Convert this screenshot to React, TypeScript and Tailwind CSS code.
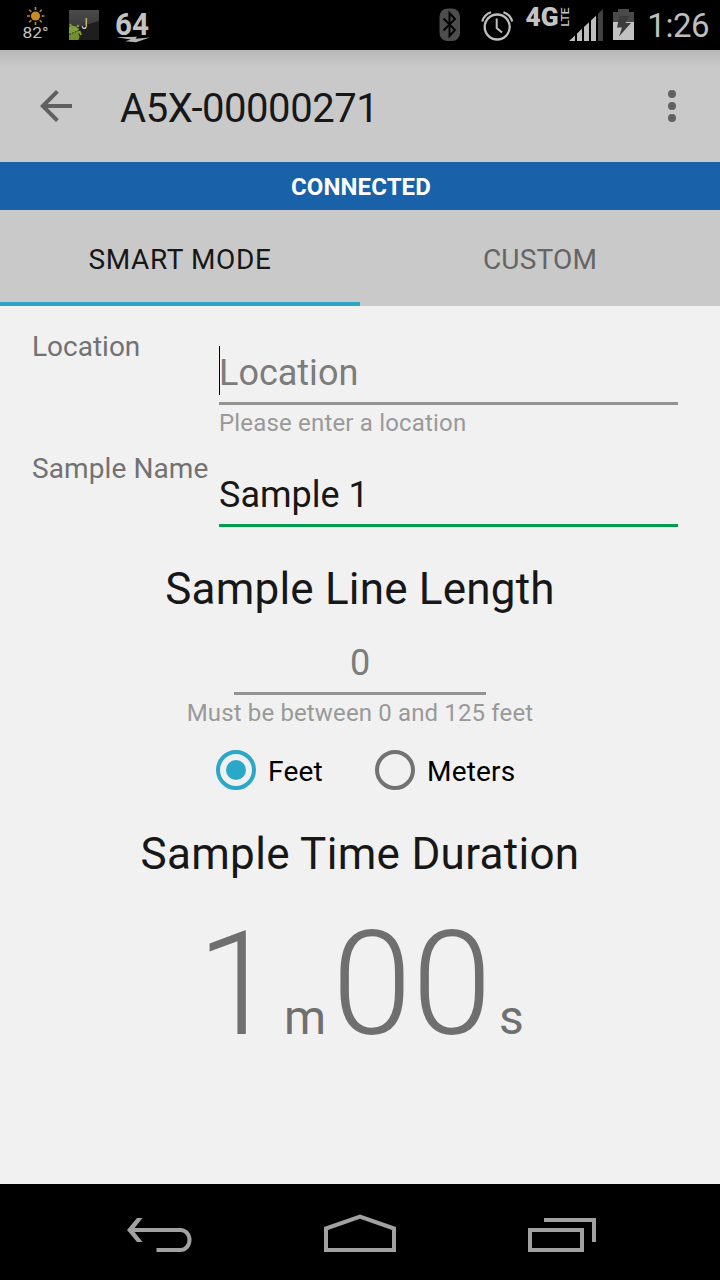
import { useState } from "react";

function StatusBar() {
  return (
    <div className="flex h-[50px] items-start bg-black text-[#bebebe]">
      <svg className="ml-[20px] shrink-0" width="32" height="50" viewBox="0 0 32 50">
        <g stroke="#c08a2c" strokeWidth="1.6">
          <path d="M15.5 7v3M15.5 22v3M7 16h3M21.500 16h3M9.300 9.800l2 2M19.700 20.200l2 2M9.300 22.200l2-2M19.700 11.800l2-2" />
        </g>
        <circle cx="15.500" cy="16" r="4.600" fill="#c68c26" />
        <text x="2.500" y="37.700" fontSize="15.500" textLength="26" lengthAdjust="spacingAndGlyphs" fill="#c4c4c4" fontFamily="Roboto, sans-serif">82°</text>
      </svg>

      <svg className="ml-[17px] mt-[10px] shrink-0" width="30" height="30" viewBox="0 0 30 30">
        <defs>
          <linearGradient id="tile" x1="0" y1="0" x2="0" y2="1">
            <stop offset="0" stopColor="#4b4b4b" />
            <stop offset="1" stopColor="#2c2c2c" />
          </linearGradient>
        </defs>
        <rect width="30" height="30" fill="url(#tile)" />
        <path d="M0 20L30 11V30H0z" fill="#1e1e1e" />
        <path d="M0 17q5-3 9.500 1.500l1.500 4-11 5z" fill="#82a038" />
        <path d="M0 25l9-3 1.500 5-1 3H0z" fill="#6f8e2c" />
        <path d="M10.500 21l1.500 4M2 16L1 14M8.500 17l1-2" stroke="#82a038" strokeWidth="2" />
        <path d="M0 24.500l10-4" stroke="#26301a" strokeDasharray="2 1" />
        <text x="12.500" y="19" fontSize="15" textLength="6" lengthAdjust="spacingAndGlyphs" fill="#d8d8d8" fontFamily="Roboto, sans-serif">J</text>
      </svg>

      <svg className="ml-[15px] shrink-0" width="40" height="50" viewBox="0 0 40 50">
        <text x="1" y="35" fontSize="31" fontWeight="700" textLength="34" lengthAdjust="spacingAndGlyphs" fill="#c2c2c2" fontFamily="Roboto, sans-serif">64</text>
        <path d="M2 37.200L23 36.800 21.500 38.700 36 37.500 22 42.200 11 41.200 17 39.600z" fill="#b4b4b4" />
      </svg>

      <div className="ml-auto flex items-start">
        <svg className="mt-[8px]" width="22" height="34" viewBox="0 0 22 34">
          <rect x="0.500" y="0.500" width="20.500" height="32.500" rx="8" fill="#4d4d4d" />
          <path d="M4.500 10.500L16 22l-5.500 6V5L16 11 4.500 22.500" fill="none" stroke="#000" strokeWidth="1.900" />
        </svg>

        <svg className="ml-[20px] mt-[9px]" width="33" height="33" viewBox="0 0 33 33" fill="none" stroke="#bebebe">
          <circle cx="16.200" cy="18" r="12.500" strokeWidth="2.300" />
          <path d="M15.700 9.500v9.500l5.300 4.500" strokeWidth="2" />
          <path d="M1.300 12.500Q3 5.500 10 3.200M31.200 12.500Q29.400 5.500 22.400 3.200" strokeWidth="2.200" />
        </svg>

        <svg className="ml-[12px]" width="44" height="50" viewBox="0 0 44 50" fill="#c4c4c4" fontFamily="Roboto, sans-serif">
          <text x="-0.500" y="25.800" fontSize="25" fontWeight="900" textLength="33" lengthAdjust="spacingAndGlyphs">4G</text>
          <text transform="translate(42.500 26.500) rotate(-90)" fontSize="11.500" fontWeight="500" textLength="19" lengthAdjust="spacingAndGlyphs">LTE</text>
        </svg>

        <svg className="-ml-[1px] mt-[9px]" width="34" height="32" viewBox="0 0 34 32" fill="#bebebe">
          <path d="M0 32L6 26.500V32zM8 24.500l5-4.700V32H8zM15 18l5-4.700V32h-5zM22 11.500l5-4.700V32h-5z" />
          <path d="M29 4.800L34 0v32h-5z" fill="#414141" />
        </svg>

        <svg className="ml-[10px] mt-[9px]" width="21" height="32" viewBox="0 0 21 32">
          <path d="M5 0h11v3h5v10H0V3h5z" fill="#4a4a4a" />
          <path d="M0 13h21v18H0z" fill="#c2c2c2" />
          <path d="M6.500 7h9.500L12.500 14H18L6 27.500l3-9H4z" fill="#3c3c3c" />
        </svg>

        <span className="ml-[13px] mr-[11px] mt-[7px] text-[33px] leading-[38px] tracking-[-0.5px]">1:26</span>
      </div>
    </div>
  );
}

function Toolbar() {
  return (
    <header className="flex h-[112px] items-center bg-[#c9c9c9] bg-linear-to-b from-[#b8b8b8] to-[#c9c9c9] to-15%">
      <button type="button" aria-label="Back" className="ml-[40px]">
        <svg width="32" height="32" viewBox="0 0 32 32" fill="none" stroke="#606060" strokeWidth="4">
          <path d="M32 16H3.500M17.400 1.400L2.800 16l14.600 14.600" />
        </svg>
      </button>
      <h1 className="ml-[48px] mt-[5px] text-[40px] leading-[47px] tracking-[-0.45px] text-[#171717]">A5X-00000271</h1>
      <button type="button" aria-label="More" className="ml-auto mr-[44px] flex flex-col gap-[4px]">
        <span className="size-[8px] rounded-full bg-[#606060]" />
        <span className="size-[8px] rounded-full bg-[#606060]" />
        <span className="size-[8px] rounded-full bg-[#606060]" />
      </button>
    </header>
  );
}

const tabs = ["SMART MODE", "CUSTOM"];
const units = ["Feet", "Meters"];

export default function App() {
  const [tab, setTab] = useState(0);
  const [unit, setUnit] = useState("Feet");

  return (
    <div className="flex h-[1280px] w-[720px] flex-col overflow-hidden bg-[#f1f1f1] font-[Roboto,sans-serif]">
      <StatusBar />
      <Toolbar />

      <div className="flex h-[48px] items-center justify-center bg-[#1961a8] pl-[2px] pt-[2px] text-[24px] font-bold tracking-[0.1px] text-white">
        CONNECTED
      </div>

      <nav className="flex h-[96px] bg-[#c9c9c9]">
        {tabs.map((name, index) => (
          <button
            key={name}
            type="button"
            onClick={() => setTab(index)}
            className={`flex-1 border-b-4 pt-[8px] text-[28px] ${
              tab === index
                ? "border-[#2ba8c8] tracking-[0.6px] text-[#171717]"
                : "border-transparent tracking-[0.2px] text-[#656565]"
            }`}
          >
            {name}
          </button>
        ))}
      </nav>

      <main className="flex flex-1 flex-col items-center">
        <div className="flex w-full pl-[32px] pr-[42px] pt-[24px]">
          <label className="w-[187px] text-[28px] leading-[33px] text-[#727272]">Location</label>
          <div className="flex-1">
            <div className="mt-[16px] flex h-[59px] border-b-3 border-[#939393]">
              <span className="h-[49px] w-px bg-black" />
              <span className="-ml-px mt-[6px] text-[36px] leading-[42px] text-[#7c7c7c]">Location</span>
            </div>
            <p className="mt-[4px] text-[24px] leading-[28px] tracking-[0.18px] text-[#999999]">Please enter a location</p>
          </div>
        </div>

        <div className="flex w-full pl-[32px] pr-[42px] pt-[15px]">
          <label className="w-[187px] whitespace-nowrap text-[28px] leading-[33px] tracking-[0.1px] text-[#727272]">Sample Name</label>
          <div className="mt-[22px] h-[53px] flex-1 border-b-3 border-[#009b4d] text-[36px] leading-[42px] text-[#171717]">
            Sample 1
          </div>
        </div>

        <h2 className="mt-[36px] text-[44px] leading-[52px] tracking-[0.2px] text-[#171717]">Sample Line Length</h2>
        <div className="mt-[27px] h-[53px] w-[252px] border-b-3 border-[#939393] text-center text-[36px] leading-[42px] text-[#7c7c7c]">
          0
        </div>
        <p className="mt-[4px] text-[24px] leading-[28px] tracking-[0.14px] text-[#999999]">Must be between 0 and 125 feet</p>

        <div className="mt-[23px] flex w-full pl-[216px]">
          {units.map((name) => (
            <button key={name} type="button" onClick={() => setUnit(name)} className="flex h-[40px] w-[159px] items-center">
              <span
                className={`flex size-[40px] items-center justify-center rounded-full border-4 ${
                  unit === name ? "border-[#2ba8c8]" : "border-[#727272]"
                }`}
              >
                {unit === name && <span className="size-[20px] rounded-full bg-[#2ba8c8]" />}
              </span>
              <span className="ml-[12px] mt-[3px] text-[28px] leading-[33px] tracking-[0.2px] text-black">{name}</span>
            </button>
          ))}
        </div>

        <h2 className="mt-[38px] text-[44px] leading-[52px] tracking-[0.3px] text-[#171717]">Sample Time Duration</h2>
        <div className="mt-[20px] flex w-full items-baseline pl-[197px] leading-[169px] text-[#6f6f6f]">
          <span className="w-[86px] text-[144px] font-light">1</span>
          <span className="w-[49px] pl-[1px] text-[48px]">m</span>
          <span className="w-[167px] text-[144px] font-light">00</span>
          <span className="text-[48px]">s</span>
        </div>
      </main>

      <footer className="flex h-[96px] items-start bg-black">
        <svg className="ml-[126px] mt-[32px]" width="68" height="38" viewBox="0 0 68 38" fill="none" stroke="#a1a1a1" strokeWidth="4">
          <path d="M5 14h49.500a9 10 0 0 1 0 20H30.500" />
          <path d="M11 2h5.500L7 14l9.500 12H11L1 14z" fill="#a1a1a1" stroke="none" />
        </svg>
        <svg className="ml-[128px] mt-[29px]" width="76" height="42" viewBox="0 0 76 42" fill="none" stroke="#a1a1a1" strokeWidth="4">
          <path d="M4 37V15.500L38 3.500l34 12V37z" />
        </svg>
        <svg className="ml-[130px] mt-[34px]" width="68" height="34" viewBox="0 0 68 34" fill="none" stroke="#a1a1a1" strokeWidth="4">
          <path d="M2 12h52v20H2zM16 2h50v22" />
        </svg>
      </footer>
    </div>
  );
}
